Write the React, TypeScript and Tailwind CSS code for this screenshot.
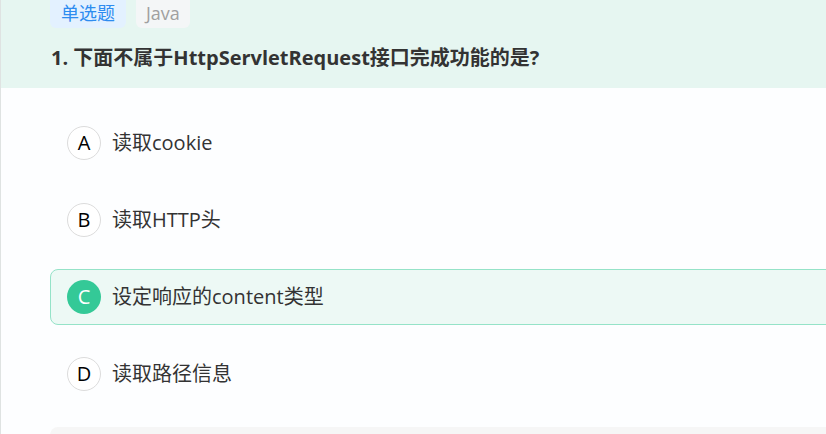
import React from 'react'

type Option = {
  key: string
  text: string
  selected?: boolean
}

const options: Option[] = [
  { key: 'A', text: '读取cookie' },
  { key: 'B', text: '读取HTTP头' },
  { key: 'C', text: '设定响应的content类型', selected: true },
  { key: 'D', text: '读取路径信息' },
]

const font = { fontFamily: '"Open Sans", "Noto Sans CJK SC", sans-serif' }

const App: React.FC = () => {
  return (
    <div
      className="w-[826px] h-[434px] overflow-hidden bg-[#fdfeff] border-l border-[#dfe3e2] text-[#333]"
      style={font}
    >
      <div className="h-[88px] bg-[#e6f6f1] pl-[49px]">
        <div className="flex gap-[10px]">
          <span className="h-[28px] px-[11px] rounded-b-[6px] bg-[#e3f1ff] text-[#2d8cf0] text-[18px] leading-[26px]">
            单选题
          </span>
          <span className="h-[28px] px-[10px] rounded-b-[6px] bg-[#f4f6f7] text-[#a0a0a0] text-[18px] leading-[26px]">
            Java
          </span>
        </div>
        <h1 className="mt-[15px] text-[20px] font-bold leading-[30px] pl-[1px]">
          1. 下面不属于HttpServletRequest接口完成功能的是?
        </h1>
      </div>

      <div className="pl-[49px] w-[900px]">
        <div className="pt-[27px] flex flex-col gap-[21px]">
          {options.map(opt => (
            <div
              key={opt.key}
              className={
                opt.selected
                  ? 'h-[56px] flex items-center gap-[11px] pl-[16px] rounded-[8px] border border-[#95e3c8] bg-[#edf9f5]'
                  : 'h-[56px] flex items-center gap-[11px] pl-[16px] rounded-[8px] border border-transparent'
              }
            >
              <span
                className={
                  opt.selected
                    ? 'w-[34px] h-[34px] rounded-full bg-[#34c997] text-white flex items-center justify-center text-[20px]'
                    : 'w-[34px] h-[34px] rounded-full border border-[#dcdcdc] bg-white text-black flex items-center justify-center text-[20px]'
                }
              >
                {opt.key}
              </span>
              <span className="text-[20px]">{opt.text}</span>
            </div>
          ))}
        </div>
        <div className="mt-[25px] h-[40px] rounded-tl-[8px] bg-[#f6f6f6]" />
      </div>
    </div>
  )
}

export default App
